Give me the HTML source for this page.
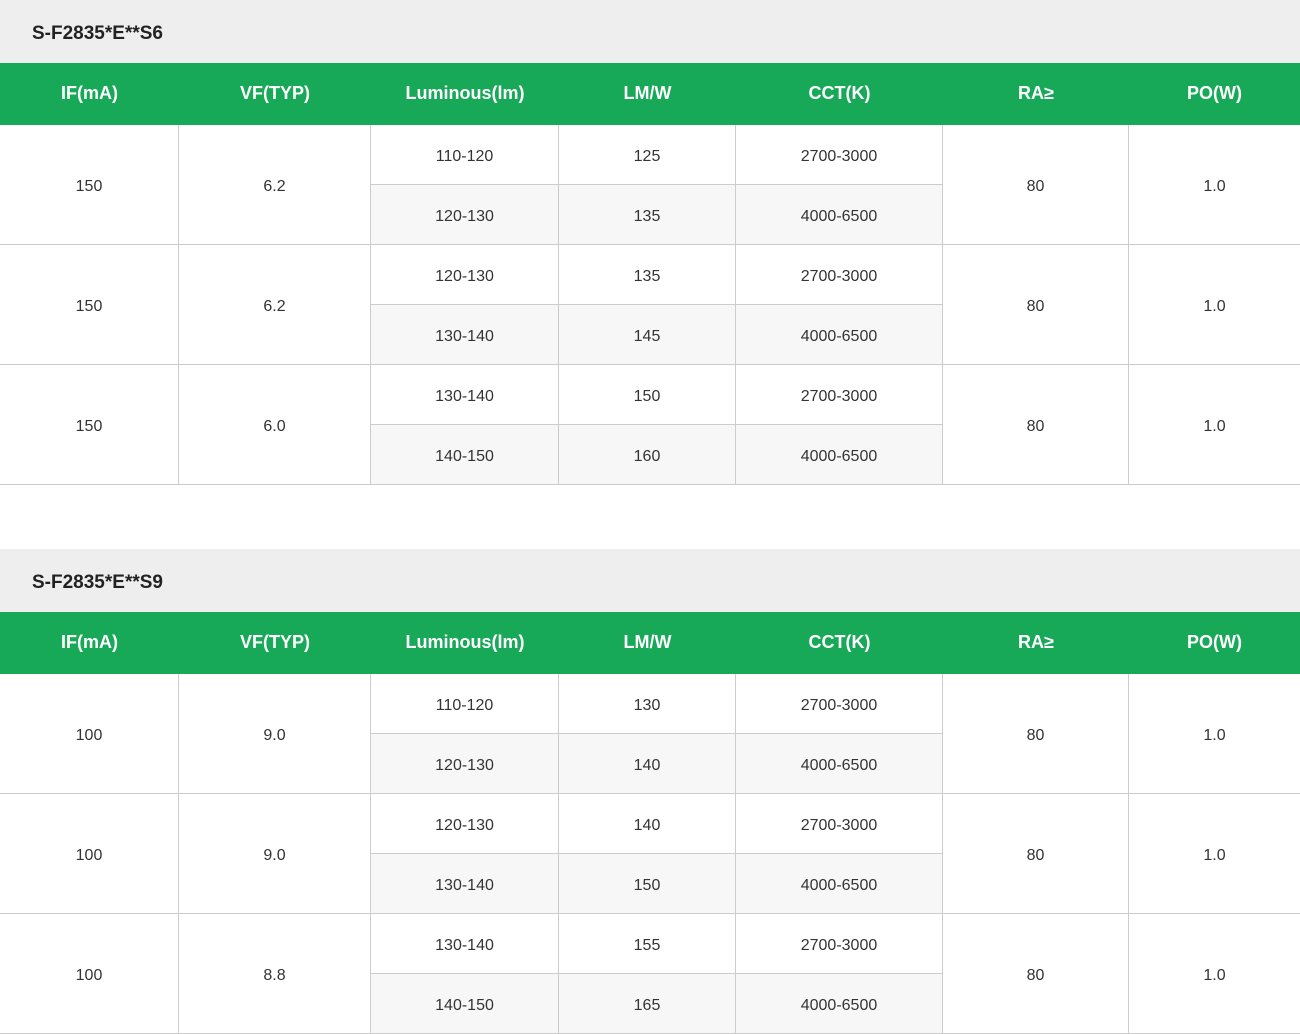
<!DOCTYPE html>
<html><head><meta charset="utf-8"><style>
*{margin:0;padding:0;box-sizing:border-box}
body{width:1300px;height:1034px;overflow:hidden;background:#fff;font-family:"Liberation Sans",Arial,sans-serif;color:#333}
.sec{position:absolute;left:0;width:1300px}
.title{height:63px;background:#eee;font-weight:bold;font-size:19px;color:#222;padding-left:32px;line-height:67px}
.head{height:62px;background:#17a957;position:relative}
.head div{position:absolute;top:0;height:62px;line-height:60px;text-align:center;color:#fff;font-weight:bold;font-size:18px}
.grp{height:120px;position:relative;border-bottom:1px solid #ccc}
.c{position:absolute;top:0;height:119px;border-right:1px solid #ccc;display:flex;align-items:center;justify-content:center;font-size:16px;padding-top:4px}
.s{position:absolute;height:60px;border-right:1px solid #ccc;display:flex;align-items:center;justify-content:center;font-size:16px;padding-top:4px}
.s.t{top:0;border-bottom:1px solid #ccc;height:60px}
.s.b{top:60px;height:59px;background:#f7f7f7}
</style></head><body>

<div class="sec" style="top:0">
<div class="title">S-F2835*E**S6</div>
<div class="head">
<div style="left:0;width:179px">IF(mA)</div><div style="left:179px;width:192px">VF(TYP)</div><div style="left:371px;width:188px">Luminous(lm)</div><div style="left:559px;width:177px">LM/W</div><div style="left:736px;width:207px">CCT(K)</div><div style="left:943px;width:186px">RA≥</div><div style="left:1129px;width:171px">PO(W)</div>
</div>
<div class="grp">
<div class="c" style="left:0;width:179px">150</div><div class="c" style="left:179px;width:192px">6.2</div>
<div class="s t" style="left:371px;width:188px">110-120</div><div class="s b" style="left:371px;width:188px">120-130</div>
<div class="s t" style="left:559px;width:177px">125</div><div class="s b" style="left:559px;width:177px">135</div>
<div class="s t" style="left:736px;width:207px">2700-3000</div><div class="s b" style="left:736px;width:207px">4000-6500</div>
<div class="c" style="left:943px;width:186px">80</div><div class="c" style="left:1129px;width:171px;border-right:0">1.0</div>
</div>
<div class="grp">
<div class="c" style="left:0;width:179px">150</div><div class="c" style="left:179px;width:192px">6.2</div>
<div class="s t" style="left:371px;width:188px">120-130</div><div class="s b" style="left:371px;width:188px">130-140</div>
<div class="s t" style="left:559px;width:177px">135</div><div class="s b" style="left:559px;width:177px">145</div>
<div class="s t" style="left:736px;width:207px">2700-3000</div><div class="s b" style="left:736px;width:207px">4000-6500</div>
<div class="c" style="left:943px;width:186px">80</div><div class="c" style="left:1129px;width:171px;border-right:0">1.0</div>
</div>
<div class="grp">
<div class="c" style="left:0;width:179px">150</div><div class="c" style="left:179px;width:192px">6.0</div>
<div class="s t" style="left:371px;width:188px">130-140</div><div class="s b" style="left:371px;width:188px">140-150</div>
<div class="s t" style="left:559px;width:177px">150</div><div class="s b" style="left:559px;width:177px">160</div>
<div class="s t" style="left:736px;width:207px">2700-3000</div><div class="s b" style="left:736px;width:207px">4000-6500</div>
<div class="c" style="left:943px;width:186px">80</div><div class="c" style="left:1129px;width:171px;border-right:0">1.0</div>
</div>
</div>

<div class="sec" style="top:549px">
<div class="title">S-F2835*E**S9</div>
<div class="head">
<div style="left:0;width:179px">IF(mA)</div><div style="left:179px;width:192px">VF(TYP)</div><div style="left:371px;width:188px">Luminous(lm)</div><div style="left:559px;width:177px">LM/W</div><div style="left:736px;width:207px">CCT(K)</div><div style="left:943px;width:186px">RA≥</div><div style="left:1129px;width:171px">PO(W)</div>
</div>
<div class="grp">
<div class="c" style="left:0;width:179px">100</div><div class="c" style="left:179px;width:192px">9.0</div>
<div class="s t" style="left:371px;width:188px">110-120</div><div class="s b" style="left:371px;width:188px">120-130</div>
<div class="s t" style="left:559px;width:177px">130</div><div class="s b" style="left:559px;width:177px">140</div>
<div class="s t" style="left:736px;width:207px">2700-3000</div><div class="s b" style="left:736px;width:207px">4000-6500</div>
<div class="c" style="left:943px;width:186px">80</div><div class="c" style="left:1129px;width:171px;border-right:0">1.0</div>
</div>
<div class="grp">
<div class="c" style="left:0;width:179px">100</div><div class="c" style="left:179px;width:192px">9.0</div>
<div class="s t" style="left:371px;width:188px">120-130</div><div class="s b" style="left:371px;width:188px">130-140</div>
<div class="s t" style="left:559px;width:177px">140</div><div class="s b" style="left:559px;width:177px">150</div>
<div class="s t" style="left:736px;width:207px">2700-3000</div><div class="s b" style="left:736px;width:207px">4000-6500</div>
<div class="c" style="left:943px;width:186px">80</div><div class="c" style="left:1129px;width:171px;border-right:0">1.0</div>
</div>
<div class="grp">
<div class="c" style="left:0;width:179px">100</div><div class="c" style="left:179px;width:192px">8.8</div>
<div class="s t" style="left:371px;width:188px">130-140</div><div class="s b" style="left:371px;width:188px">140-150</div>
<div class="s t" style="left:559px;width:177px">155</div><div class="s b" style="left:559px;width:177px">165</div>
<div class="s t" style="left:736px;width:207px">2700-3000</div><div class="s b" style="left:736px;width:207px">4000-6500</div>
<div class="c" style="left:943px;width:186px">80</div><div class="c" style="left:1129px;width:171px;border-right:0">1.0</div>
</div>
</div>
</body></html>
